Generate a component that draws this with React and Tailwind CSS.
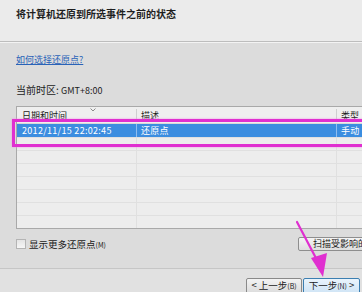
const FONT = { fontFamily: '"Noto Sans CJK SC", "Liberation Sans", sans-serif' };

// ─── Restore point table ─────────────────────────────────────────────────
const Cols = ({ a, b, c, cls = "", divider = "border-[#dcdcdc]" }) => (
    <div className={`flex ${cls}`}>
        <div className={`w-[120px] shrink-0 pl-[5px] border-r ${divider}`}>{a}</div>
        <div className={`w-[200px] shrink-0 pl-[4px] border-r ${divider}`}>{b}</div>
        <div className="flex-1 pl-[4px]">{c}</div>
    </div>
);

const RestoreTable = () => (
    <div className="w-[380px] border border-[#a9a9a9] bg-[#ededed] text-[9px] leading-[13px] text-[#1a1a1a]">
        <div className="relative">
            <Cols
                cls="h-[17px] items-end pb-[1px] bg-[#efefef] border-b border-[#d8d8d8]"
                divider="border-[#cfcfcf]"
                a="日期和时间"
                b="描述"
                c="类型"
            />
            <svg className="absolute left-[73px] top-[1px]" width="6" height="4" viewBox="0 0 6 4">
                <path d="M0.5 0.5 L3 3 L5.5 0.5" fill="none" stroke="#8a8a8a" strokeWidth="1" />
            </svg>
        </div>
        <Cols
            cls="h-[13px] items-center bg-[#3b8de0] text-white tracking-[0.3px]"
            divider="border-[#8fbdf0]"
            a="2012/11/15 22:02:45"
            b="还原点"
            c="手动"
        />
        {Array.from({ length: 7 }).map((_, i) => (
            <Cols key={i} cls="h-[13px] border-t border-[#e0e0e0]" divider="border-[#e0e0e0]" a="" b="" c="" />
        ))}
    </div>
);

// ─── App ─────────────────────────────────────────────────────────────────
export default function App() {
    return (
        <div className="relative w-[362px] h-[292px] overflow-hidden bg-[#dcdcdc] flex flex-col" style={FONT}>
            {/* ── Header ── */}
            <div className="h-[41px] shrink-0 bg-[#ebebeb] pl-4 pt-[8px]">
                <h1 className="text-[10px] leading-[12px] font-bold text-[#1e1e1e]">将计算机还原到所选事件之前的状态</h1>
            </div>
            <div className="h-px bg-[#bdbdbd]" />
            <div className="h-px bg-[#f3f3f3]" />

            {/* ── Body ── */}
            <div className="pl-4 flex flex-col">
                <a className="mt-[11px] text-[9px] leading-[12px] text-[#2a63b8] underline w-fit">如何选择还原点?</a>
                <p className="mt-[18px] text-[10px] leading-[12px] text-[#222]">
                    当前时区: <span className="text-[9px]">GMT+8:00</span>
                </p>
                <div className="mt-[9px]">
                    <RestoreTable />
                </div>
                <div className="mt-[8px] w-[360px] h-[14px] flex items-center">
                    <span className="w-[10px] h-[10px] border border-[#b4b4b4] bg-gradient-to-b from-[#e4e4e4] to-[#f6f6f6]" />
                    <span className="ml-[3px] text-[9.5px] leading-[12px] text-[#1a1a1a]">
                        显示更多还原点<span className="text-[7px]">(M)</span>
                    </span>
                    <button className="ml-auto w-[78px] h-[14px] rounded-[2px] border border-[#8e8e8e] bg-gradient-to-b from-[#f4f4f4] to-[#dedede] text-[9px] leading-[12px] text-[#1a1a1a] text-left pl-[14px] whitespace-nowrap overflow-hidden">
                        扫描受影响的程序
                    </button>
                </div>
            </div>

            {/* ── Footer ── */}
            <div className="mt-auto h-[24px] border-t border-[#c6c6c6] bg-[#e1e1e1] flex justify-end items-start pt-[9px] pr-[2px] gap-[1px]">
                <button className="w-[56px] h-[16px] rounded-[2px] border border-[#8a8a8a] bg-gradient-to-b from-[#f3f3f3] to-[#dcdcdc] text-[9.5px] leading-[13px] text-[#1a1a1a] whitespace-nowrap">
                    &lt; 上一步<span className="text-[7px]">(B)</span>
                </button>
                <button className="w-[57px] h-[16px] rounded-[2px] border border-[#3c7fb1] bg-gradient-to-b from-[#eaf4fc] to-[#cfe4f5] text-[9.5px] leading-[13px] text-[#1a1a1a] whitespace-nowrap">
                    下一步<span className="text-[7px]">(N)</span> &gt;
                </button>
            </div>

            {/* ── Annotations ── */}
            <div className="absolute left-[12px] top-[119px] w-[360px] h-[28px] border-[3px] border-[#e02fd0] shadow-[0_0_2px_#f28ee6]" />
            <svg className="absolute inset-0 pointer-events-none" width="362" height="292">
                <line x1="297" y1="222" x2="318" y2="262" stroke="#e02fd0" strokeWidth="2.2" strokeLinecap="round" />
                <polygon points="311,258 327,253 323,277" fill="#e02fd0" />
            </svg>
        </div>
    );
}
